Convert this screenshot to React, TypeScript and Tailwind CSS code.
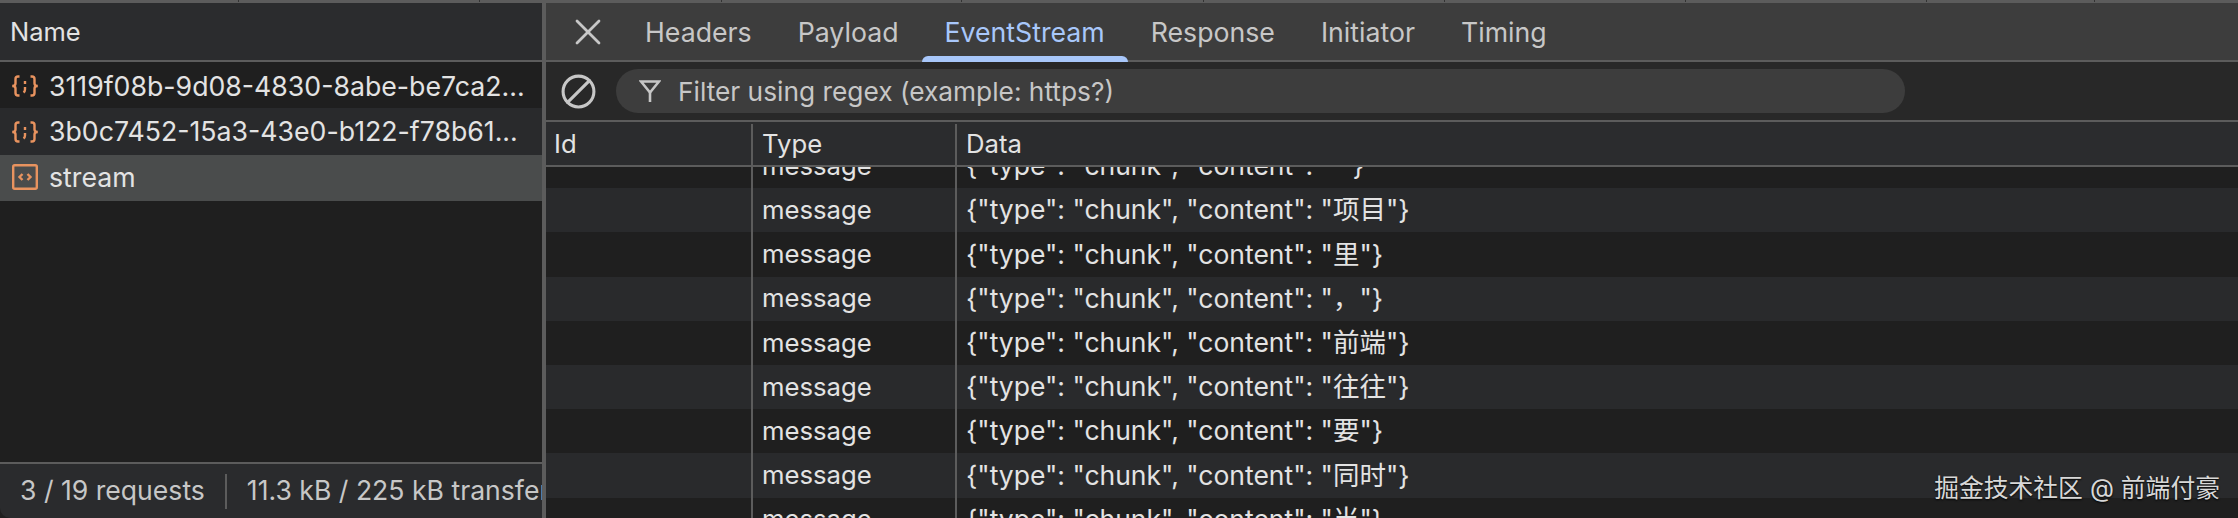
import { Ban, X } from 'lucide-react';

const tabs = ['Headers', 'Payload', 'EventStream', 'Response', 'Initiator', 'Timing'];

const messages = ['项目', '里', '，', '前端', '往往', '要', '同时', '当'];

const ticks = [239, 241, 242, 240, 242, 241, 241, 241, 168];

function JsonIcon() {
  return (
    <svg width="28" height="22" viewBox="0 0 28 22" fill="none" stroke="#e8935f" strokeWidth="2.4" className="shrink-0">
      <path d="M8.5 1.5H7C5.3 1.5 4.5 2.4 4.5 4v4.5C4.500 10 3.500 11 1.200 11c2.300 0 3.300 1 3.300 2.500V18c0 1.600.8 2.500 2.500 2.500h1.500" />
      <path d="M19.500 1.500H21c1.700 0 2.500.9 2.500 2.500v4.500c0 1.500 1 2.500 3.300 2.500-2.300 0-3.300 1-3.300 2.500V18c0 1.600-.8 2.500-2.500 2.500h-1.500" />
      <path d="M14 6v3M14 12v2.500c0 1.300-.5 2.300-1.500 3" />
    </svg>
  );
}

function DocIcon() {
  return (
    <svg width="28" height="26" viewBox="0 0 28 26" fill="none" stroke="#e8935f" strokeWidth="2.4" className="shrink-0">
      <rect x="2.200" y="1.200" width="23.600" height="23.600" rx="1.500" />
      <path d="M11.500 10 8.500 13l3 3M16.500 10l3 3-3 3" />
    </svg>
  );
}

function FilterIcon() {
  return (
    <svg width="22" height="24" viewBox="0 0 22 24" fill="none" stroke="currentColor" strokeWidth="2.6" className="shrink-0">
      <path d="M2 2.500h18L11 13.500z" />
      <path d="M11 12v11" />
    </svg>
  );
}

function Row({ text, dark }: { text: string; dark: boolean }) {
  return (
    <div className={`grid h-[44.200px] grid-cols-[207px_204px_1fr] ${dark ? 'bg-[#1f1f1f]' : 'bg-[#292a2c]'}`}>
      <div className="border-r-2 border-[#5c5c5c]" />
      <div className="flex items-center border-r-2 border-[#5c5c5c] pl-[9px] text-[25.700px]">message</div>
      <div className="flex items-center whitespace-pre pl-[9px] text-[26.500px]">{`{"type": "chunk", "content": "${text}"}`}</div>
    </div>
  );
}

export default function App() {
  return (
    <div className="relative flex h-[518px] w-[2238px] flex-col overflow-hidden bg-[#1f1f1f] font-['Inter','Noto_Sans_CJK_SC',sans-serif] text-[26px] text-[#e3e3e3]">
      {/* Overview timeline edge */}
      <div className="flex h-[3px] shrink-0 bg-[#5c5c5c]">
        {ticks.map((w, i) => (
          <div key={i} className="h-[2px] shrink-0 border-r border-[#333333]" style={{ width: w }} />
        ))}
      </div>

      <div className="flex min-h-0 flex-1">
        {/* Request list */}
        <div className="flex w-[546px] shrink-0 flex-col border-r-4 border-[#5c5c5c]">
          <div className="flex h-[59px] shrink-0 items-center border-b-2 border-[#5c5c5c] bg-[#2b2c2e] pl-[10px] pt-[2px] text-[25.500px]">Name</div>
          <div className="flex h-[46px] items-center gap-[10px] bg-[#1f1f1f] pl-[11px] pt-[2px] text-[26.700px]">
            <JsonIcon />
            <span>3119f08b-9d08-4830-8abe-be7ca2...</span>
          </div>
          <div className="flex h-[47px] items-center gap-[10px] bg-[#292a2c] pl-[11px] text-[26.700px]">
            <JsonIcon />
            <span>3b0c7452-15a3-43e0-b122-f78b61...</span>
          </div>
          <div className="flex h-[46px] items-center gap-[10px] bg-[#4a4c4c] pb-[2px] pl-[11px] text-[26.700px]">
            <DocIcon />
            <span>stream</span>
          </div>
          <div className="flex-1" />
          <div className="flex h-[56px] shrink-0 items-center overflow-hidden whitespace-nowrap rounded-bl-[10px] border-t-2 border-[#5c5c5c] bg-[#2a2b2d] pl-[20px] text-[26.600px] text-[#c7c7c7]">
            <span>3 / 19 requests</span>
            <span className="mx-[20px] h-[35px] w-[2px] shrink-0 bg-[#5c5c5c]" />
            <span>11.3 kB / 225 kB transferred</span>
          </div>
        </div>

        {/* Detail pane */}
        <div className="flex min-w-0 flex-1 flex-col">
          <div className="flex h-[59px] shrink-0 items-center border-b-2 border-[#5c5c5c] bg-[#3d3d3d] text-[26.700px] text-[#c7c7c7]">
            <X size={44} strokeWidth={1.500} className="ml-[20px] mr-[12px] shrink-0" />
            {tabs.map((tab) =>
              tab === 'EventStream' ? (
                <div key={tab} className="relative flex h-full items-center px-[23px] pt-[2px] text-[#a8c7fa]">
                  {tab}
                  <span className="absolute inset-x-0 bottom-[-2px] h-[6px] rounded-t-[6px] bg-[#a8c7fa]" />
                </div>
              ) : (
                <div key={tab} className="flex h-full items-center px-[23px] pt-[2px]">
                  {tab}
                </div>
              ),
            )}
          </div>

          <div className="flex h-[60px] shrink-0 items-center border-b-2 border-[#5c5c5c] bg-[#282828] text-[26.300px] text-[#c7c7c7]">
            <Ban size={37} strokeWidth={2} className="ml-[14px] shrink-0 -scale-x-100" />
            <div className="ml-[19px] flex h-[44px] w-[1289px] items-center rounded-full bg-[#3d3d3d] pl-[23px]">
              <FilterIcon />
              <span className="ml-[17px] pt-[2px]">Filter using regex (example: https?)</span>
            </div>
          </div>

          {/* EventStream table */}
          <div className="grid h-[45px] shrink-0 grid-cols-[207px_204px_1fr] border-b-2 border-[#5c5c5c] bg-[#2b2c2e] pt-[2px] text-[25.700px]">
            <div className="flex items-center border-r-2 border-[#5c5c5c] pl-[8px]">Id</div>
            <div className="flex items-center border-r-2 border-[#5c5c5c] pl-[9px]">Type</div>
            <div className="flex items-center pl-[9px]">Data</div>
          </div>

          <div className="min-h-0 flex-1 overflow-hidden">
            <div className="mt-[-23px]">
              <Row text=" " dark />
              {messages.map((m, i) => (
                <Row key={m} text={m} dark={i % 2 === 1} />
              ))}
            </div>
          </div>
        </div>
      </div>

      <div className="pointer-events-none absolute bottom-[11px] right-[18px] whitespace-nowrap text-[24.800px] text-[#d8d8d8] [text-shadow:0_1px_2px_#000]">
        掘金技术社区 @ 前端付豪
      </div>
    </div>
  );
}
